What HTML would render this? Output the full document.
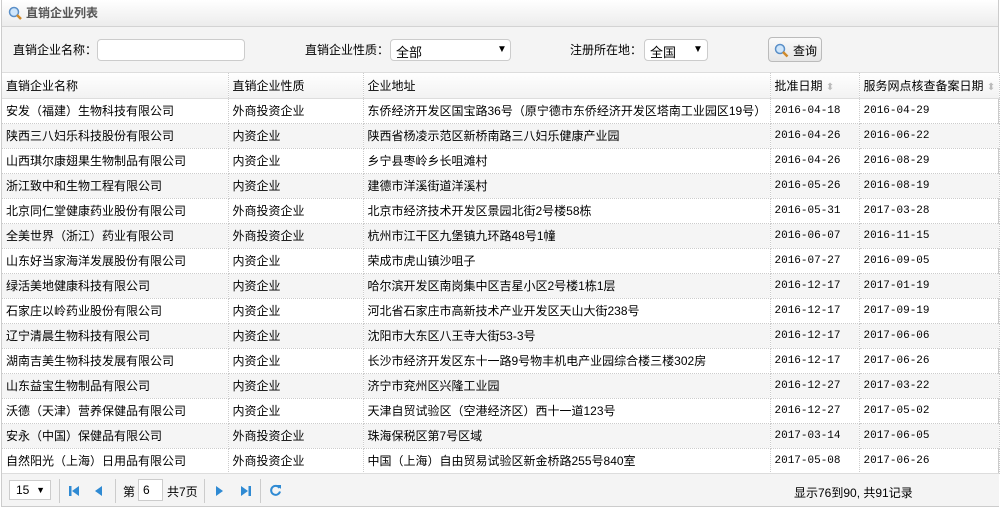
<!DOCTYPE html>
<html><head><meta charset="utf-8"><style>
*{margin:0;padding:0;box-sizing:border-box}
body{width:1005px;height:509px;background:#fff;font-family:"Liberation Sans","Noto Sans CJK SC",sans-serif;font-size:12px;color:#000;position:relative;overflow:hidden}
.panel{position:absolute;left:1px;top:0;width:998px;height:507px;border:1px solid #ccc;border-top:none}
.hdr{height:27px;background:linear-gradient(#fff,#ececec);border-bottom:1px solid #d3d3d3;font-weight:bold;color:#555;line-height:26px;padding-left:24px;position:relative;font-size:12px}
.tb{height:46px;background:#f4f4f4;position:relative;border-bottom:1px solid #ddd}
.lbl{position:absolute;top:14px}
.inp{position:absolute;background:#fff;border:1px solid #ccc;border-radius:4px;height:22px;top:12px}
.inp i{position:absolute;font-style:normal}
table{border-collapse:collapse;table-layout:fixed;width:997px;position:absolute;left:0;top:73px}
td{height:25px;border-right:1px dotted #ccc;border-bottom:1px dotted #ccc;padding-left:4px;white-space:nowrap;overflow:hidden}
thead td{background:linear-gradient(#fff,#f2f2f2);border-bottom:1px solid #ddd}
tbody tr:nth-child(even) td{background:#f5f5f5}
.d{font-family:"Liberation Mono","DejaVu Sans Mono",monospace;font-size:11px}
.sort{color:#bbb;font-size:10px}
.pg{position:absolute;left:0;top:473px;width:997px;height:33px;background:#f4f4f4;border-top:1px solid #ddd}
.pg > *{position:absolute}
.sep{width:1px;height:24px;background:#ccc;top:5px}
</style></head><body>
<div class="panel">
<div class="hdr"><svg style="position:absolute;left:6px;top:6px" width="14" height="14"><circle cx="6" cy="6" r="4.5" fill="#cfe6fb" stroke="#5a8fc8" stroke-width="1.5"/><line x1="9" y1="9" x2="13" y2="13" stroke="#d08a2a" stroke-width="2.5"/></svg>直销企业列表</div>
<div class="tb">
<span class="lbl" style="left:11px">直销企业名称：</span><div class="inp" style="left:95px;width:148px"></div>
<span class="lbl" style="left:303px">直销企业性质：</span><div class="inp" style="left:388px;width:121px"><i style="left:5px;top:2px;font-size:13px">全部</i><i style="left:106px;top:4px;font-size:10px">▼</i></div>
<span class="lbl" style="left:568px">注册所在地：</span><div class="inp" style="left:642px;width:64px"><i style="left:5px;top:2px;font-size:13px">全国</i><i style="left:48px;top:4px;font-size:10px">▼</i></div>
<div class="inp" style="left:766px;top:10px;width:54px;height:25px;background:linear-gradient(#fafafa,#e6e6e6);border-color:#bbb"><svg style="position:absolute;left:5px;top:5px" width="15" height="15"><circle cx="6" cy="6" r="4.5" fill="#cfe6fb" stroke="#5a8fc8" stroke-width="1.5"/><line x1="9" y1="9" x2="13.5" y2="13.5" stroke="#d08a2a" stroke-width="2.5"/></svg><i style="left:24px;top:4px">查询</i></div>
</div>
<table>
<colgroup><col style="width:226px"><col style="width:135px"><col style="width:407px"><col style="width:89px"><col style="width:140px"></colgroup>
<thead><tr><td>直销企业名称</td><td>直销企业性质</td><td>企业地址</td><td>批准日期 <span class="sort">⬍</span></td><td>服务网点核查备案日期 <span class="sort">⬍</span></td></tr></thead>
<tbody>
<tr><td>安发（福建）生物科技有限公司</td><td>外商投资企业</td><td>东侨经济开发区国宝路36号（原宁德市东侨经济开发区塔南工业园区19号）</td><td class="d">2016-04-18</td><td class="d">2016-04-29</td></tr>
<tr><td>陕西三八妇乐科技股份有限公司</td><td>内资企业</td><td>陕西省杨凌示范区新桥南路三八妇乐健康产业园</td><td class="d">2016-04-26</td><td class="d">2016-06-22</td></tr>
<tr><td>山西琪尔康翅果生物制品有限公司</td><td>内资企业</td><td>乡宁县枣岭乡长咀滩村</td><td class="d">2016-04-26</td><td class="d">2016-08-29</td></tr>
<tr><td>浙江致中和生物工程有限公司</td><td>内资企业</td><td>建德市洋溪街道洋溪村</td><td class="d">2016-05-26</td><td class="d">2016-08-19</td></tr>
<tr><td>北京同仁堂健康药业股份有限公司</td><td>外商投资企业</td><td>北京市经济技术开发区景园北街2号楼58栋</td><td class="d">2016-05-31</td><td class="d">2017-03-28</td></tr>
<tr><td>全美世界（浙江）药业有限公司</td><td>外商投资企业</td><td>杭州市江干区九堡镇九环路48号1幢</td><td class="d">2016-06-07</td><td class="d">2016-11-15</td></tr>
<tr><td>山东好当家海洋发展股份有限公司</td><td>内资企业</td><td>荣成市虎山镇沙咀子</td><td class="d">2016-07-27</td><td class="d">2016-09-05</td></tr>
<tr><td>绿活美地健康科技有限公司</td><td>内资企业</td><td>哈尔滨开发区南岗集中区吉星小区2号楼1栋1层</td><td class="d">2016-12-17</td><td class="d">2017-01-19</td></tr>
<tr><td>石家庄以岭药业股份有限公司</td><td>内资企业</td><td>河北省石家庄市高新技术产业开发区天山大街238号</td><td class="d">2016-12-17</td><td class="d">2017-09-19</td></tr>
<tr><td>辽宁清晨生物科技有限公司</td><td>内资企业</td><td>沈阳市大东区八王寺大街53-3号</td><td class="d">2016-12-17</td><td class="d">2017-06-06</td></tr>
<tr><td>湖南吉美生物科技发展有限公司</td><td>内资企业</td><td>长沙市经济开发区东十一路9号物丰机电产业园综合楼三楼302房</td><td class="d">2016-12-17</td><td class="d">2017-06-26</td></tr>
<tr><td>山东益宝生物制品有限公司</td><td>内资企业</td><td>济宁市兖州区兴隆工业园</td><td class="d">2016-12-27</td><td class="d">2017-03-22</td></tr>
<tr><td>沃德（天津）营养保健品有限公司</td><td>内资企业</td><td>天津自贸试验区（空港经济区）西十一道123号</td><td class="d">2016-12-27</td><td class="d">2017-05-02</td></tr>
<tr><td>安永（中国）保健品有限公司</td><td>外商投资企业</td><td>珠海保税区第7号区域</td><td class="d">2017-03-14</td><td class="d">2017-06-05</td></tr>
<tr><td>自然阳光（上海）日用品有限公司</td><td>外商投资企业</td><td>中国（上海）自由贸易试验区新金桥路255号840室</td><td class="d">2017-05-08</td><td class="d">2017-06-26</td></tr>
</tbody></table>
<div class="pg">
<div style="left:7px;top:6px;width:42px;height:20px;border:1px solid #ccc;background:#fff;padding:2px 6px">15 <span style="font-size:9px;position:absolute;right:5px;top:4px">▼</span></div>
<div class="sep" style="left:57px"></div>
<svg style="left:66px;top:11px" width="12" height="12"><rect x="1" y="1" width="2.5" height="10" fill="#2f8ad3"/><path d="M11 1 L4 6 L11 11Z" fill="#2f8ad3"/></svg>
<svg style="left:92px;top:11px" width="10" height="12"><path d="M8 1 L1 6 L8 11Z" fill="#2f8ad3"/></svg>
<div class="sep" style="left:113px"></div>
<div style="left:121px;top:9px">第</div>
<div style="left:136px;top:5px;width:25px;height:22px;border:1px solid #ccc;background:#fff;padding:3px 4px">6</div>
<div style="left:165px;top:9px">共7页</div>
<div class="sep" style="left:202px"></div>
<svg style="left:213px;top:11px" width="10" height="12"><path d="M1 1 L8 6 L1 11Z" fill="#2f8ad3"/></svg>
<svg style="left:238px;top:11px" width="12" height="12"><path d="M1 1 L8 6 L1 11Z" fill="#2f8ad3"/><rect x="8.5" y="1" width="2.5" height="10" fill="#2f8ad3"/></svg>
<div class="sep" style="left:258px"></div>
<svg style="left:267px;top:10px" width="13" height="13"><path d="M10.5 4 A4.5 4.5 0 1 0 11 7.5" fill="none" stroke="#2f8ad3" stroke-width="2"/><path d="M8 1 L12 1 L12 5Z" fill="#2f8ad3"/></svg>
<div style="left:792px;top:10px">显示76到90, 共91记录</div>
</div>
</div>
</body></html>
